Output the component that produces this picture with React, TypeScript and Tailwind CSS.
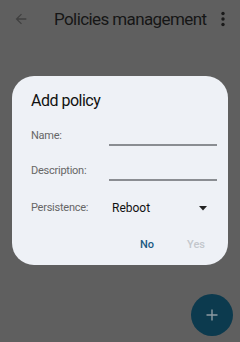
import React from "react";

export default function App() {
  return (
    <div
      className="relative w-[240px] h-[342px] overflow-hidden bg-[#5f5f5f]"
      style={{ fontFamily: "Roboto, 'Noto Sans', sans-serif" }}
    >
      {/* App bar (dimmed) */}
      <div className="flex items-center w-[240px] h-[38px] pl-[13px] pr-[14px]">
        <svg width="16" height="16" viewBox="0 0 24 24" className="text-[#404040] shrink-0">
          <path d="M20 11H7.83l5.59-5.59L12 4l-8 8 8 8 1.41-1.41L7.83 13H20v-2z" fill="currentColor" />
        </svg>
        <div className="ml-[25px] flex-1 min-w-0 text-[17px] tracking-[-0.6px] text-[#161616] leading-none whitespace-nowrap">
          Policies management
        </div>
        <svg width="6" height="16" viewBox="0 0 6 16" className="text-[#1a1a1a] shrink-0">
          <circle cx="3" cy="2.5" r="1.7" fill="currentColor" />
          <circle cx="3" cy="8" r="1.7" fill="currentColor" />
          <circle cx="3" cy="13.5" r="1.7" fill="currentColor" />
        </svg>
      </div>

      {/* Dialog */}
      <div className="absolute left-[12px] top-[76px] w-[216px] h-[189px] rounded-[22px] bg-[#eef1f6] pl-[19px] pr-[11px] pt-[15px]">
        <div className="text-[16px] tracking-[-0.5px] leading-[20px] text-[#111]">Add policy</div>
        <div className="flex items-end mt-[15px] h-[20px]">
          <div className="w-[78px] text-[11px] tracking-[-0.25px] leading-[14px] text-[#666] self-center">Name:</div>
          <div className="flex-1 h-[20px] border-b-2 border-[#8a8d92]" />
        </div>
        <div className="flex items-end mt-[15px] h-[20px]">
          <div className="w-[78px] text-[11px] tracking-[-0.25px] leading-[14px] text-[#666] self-center">Description:</div>
          <div className="flex-1 h-[20px] border-b-2 border-[#8a8d92]" />
        </div>
        <div className="flex items-center mt-[17px] h-[20px]">
          <div className="w-[81px] text-[11px] tracking-[-0.25px] leading-[14px] text-[#666]">Persistence:</div>
          <div className="text-[12px] leading-[16px] text-[#111]">Reboot</div>
          <div className="flex-1" />
          <svg width="8" height="5" viewBox="0 0 8 5" className="mr-[10px]">
            <path d="M0 0h8L4 4.5z" fill="#222" />
          </svg>
        </div>
        <div className="flex items-center mt-[17px] h-[20px]">
          <div className="ml-[109px] text-[11px] font-medium text-[#1b5a82]">No</div>
          <div className="ml-[33px] text-[11px] font-medium text-[#c3c7cc]">Yes</div>
        </div>
      </div>

      {/* FAB (dimmed) */}
      <div className="absolute left-[191px] top-[294px] w-[42px] h-[42px] rounded-full bg-[#0c3a4e] flex items-center justify-center">
        <svg width="12" height="12" viewBox="0 0 12 12">
          <path d="M6 0.5v11M0.5 6h11" stroke="#8d9ba2" strokeWidth="1.4" />
        </svg>
      </div>
    </div>
  );
}
